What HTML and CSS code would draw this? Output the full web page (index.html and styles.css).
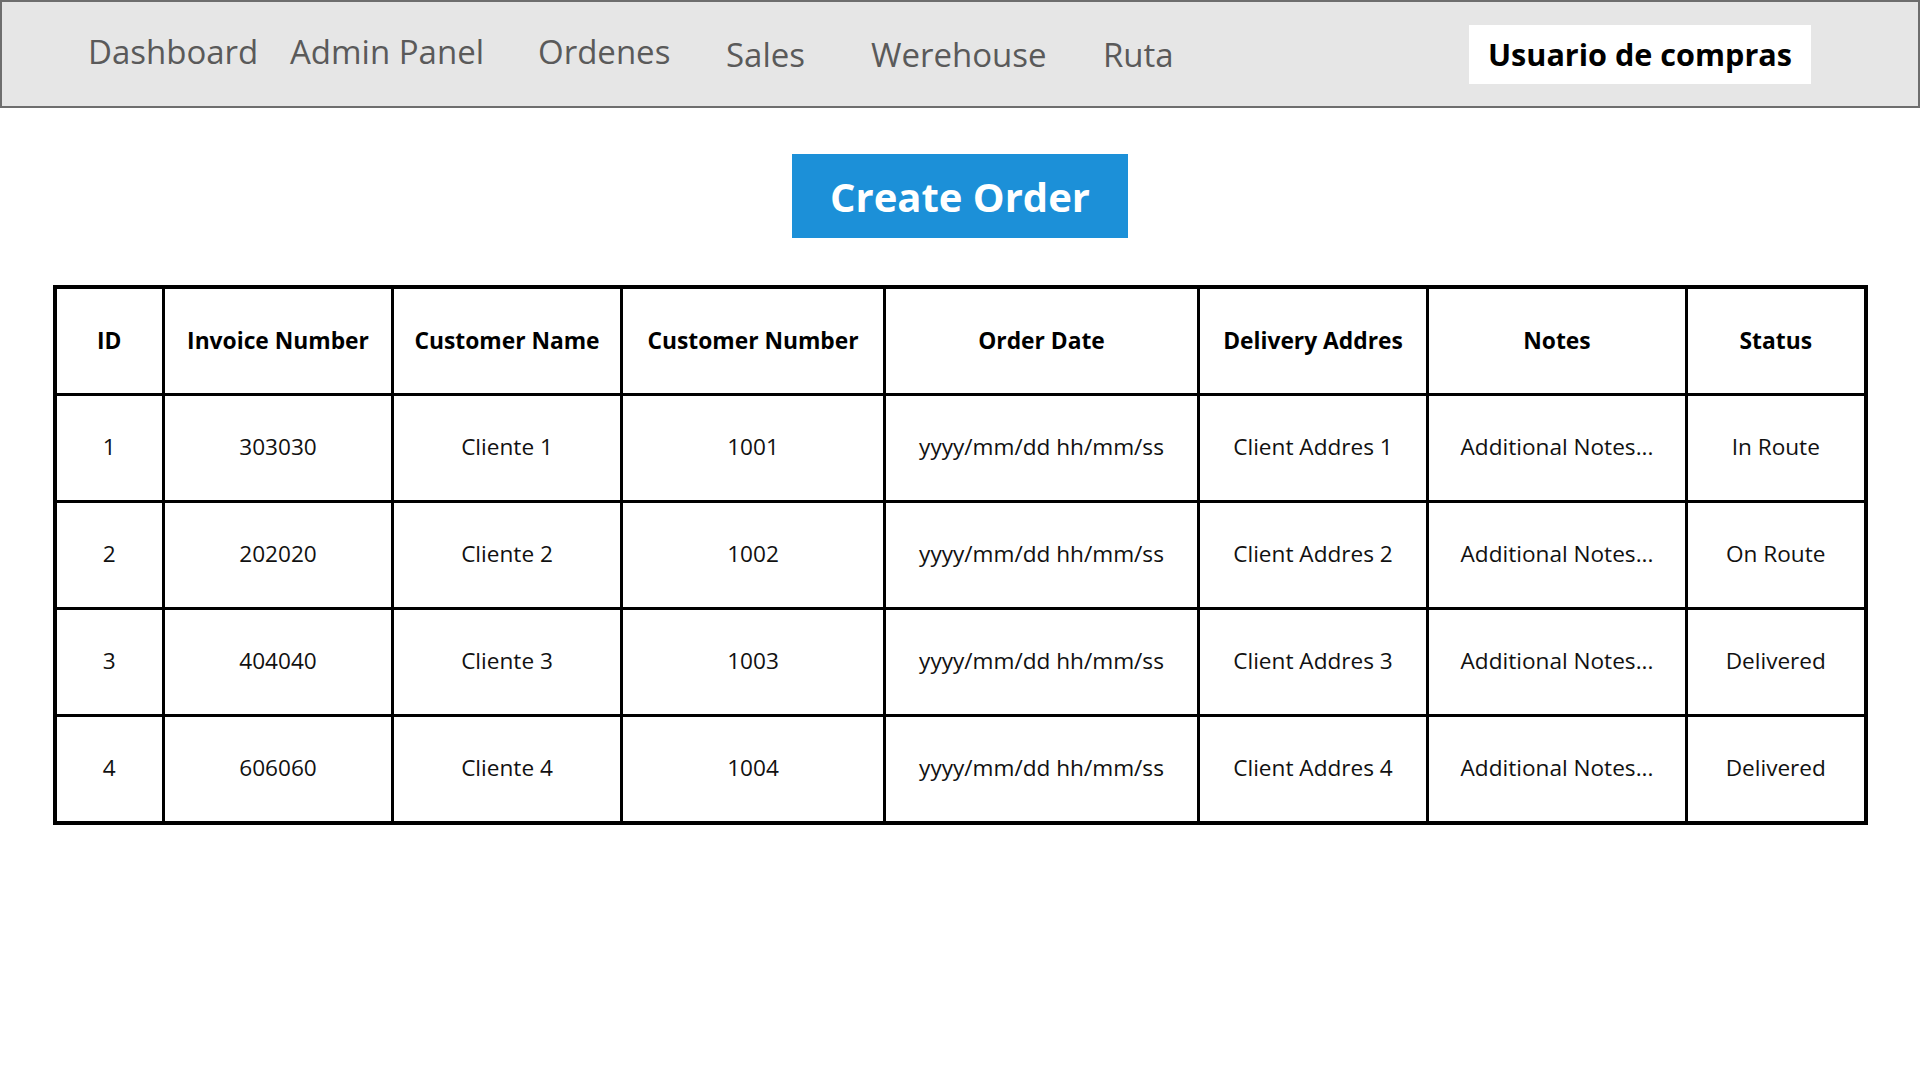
FILE: index.html
```html
<!DOCTYPE html>
<html lang="es">
<head>
<meta charset="utf-8">
<title>Ordenes</title>
<link rel="stylesheet" href="styles.css">
</head>
<body>
<header class="topbar">
  <nav class="menu">
    <a class="menu-item" href="#">Dashboard</a>
    <a class="menu-item" href="#">Admin Panel</a>
    <a class="menu-item" href="#">Ordenes</a>
    <a class="menu-item low" href="#">Sales</a>
    <a class="menu-item low" href="#">Werehouse</a>
    <a class="menu-item low" href="#">Ruta</a>
  </nav>
  <div class="user-box">Usuario de compras</div>
</header>
<main class="content">
  <button class="create-btn" type="button">Create Order</button>
  <table class="orders">
    <colgroup>
      <col class="c-id"><col class="c-inv"><col class="c-name"><col class="c-num"><col class="c-date"><col class="c-addr"><col class="c-notes"><col class="c-status">
    </colgroup>
    <thead>
      <tr><th>ID</th><th>Invoice Number</th><th>Customer Name</th><th>Customer Number</th><th>Order Date</th><th>Delivery Addres</th><th>Notes</th><th>Status</th></tr>
    </thead>
    <tbody>
      <tr><td>1</td><td>303030</td><td>Cliente 1</td><td>1001</td><td>yyyy/mm/dd hh/mm/ss</td><td>Client Addres 1</td><td>Additional Notes...</td><td>In Route</td></tr>
      <tr><td>2</td><td>202020</td><td>Cliente 2</td><td>1002</td><td>yyyy/mm/dd hh/mm/ss</td><td>Client Addres 2</td><td>Additional Notes...</td><td>On Route</td></tr>
      <tr><td>3</td><td>404040</td><td>Cliente 3</td><td>1003</td><td>yyyy/mm/dd hh/mm/ss</td><td>Client Addres 3</td><td>Additional Notes...</td><td>Delivered</td></tr>
      <tr><td>4</td><td>606060</td><td>Cliente 4</td><td>1004</td><td>yyyy/mm/dd hh/mm/ss</td><td>Client Addres 4</td><td>Additional Notes...</td><td>Delivered</td></tr>
    </tbody>
  </table>
</main>
</body>
</html>
```

FILE: styles.css
```css
html, body {
  margin: 0;
  padding: 0;
  background: #ffffff;
  font-family: "Open Sans", "Liberation Sans", sans-serif;
}

.topbar {
  box-sizing: border-box;
  height: 108px;
  background: #e6e6e6;
  border: 2px solid #6e6e6e;
  display: flex;
  align-items: center;
  padding: 0 0 0 86px;
}

.menu {
  display: grid;
  grid-template-columns: 202px 248px 188px 145px 232px 366px;
  align-items: center;
  height: 100%;
}

.menu-item {
  color: #5a5a5a;
  text-decoration: none;
  font-size: 33px;
  line-height: 40px;
  padding-top: 3px;
  padding-bottom: 8px;
}

.menu-item.low {
  padding-bottom: 0;
  padding-top: 2px;
}

.user-box {
  box-sizing: border-box;
  width: 342px;
  height: 59px;
  background: #ffffff;
  color: #000000;
  font-weight: 700;
  font-size: 30.6px;
  display: flex;
  align-items: center;
  justify-content: center;
}

.content {
  display: flex;
  flex-direction: column;
  align-items: center;
  padding-top: 46px;
}

.create-btn {
  width: 336px;
  height: 84px;
  border: none;
  background: #1c90d8;
  color: #ffffff;
  font-family: "Open Sans", "Liberation Sans", sans-serif;
  font-weight: 700;
  font-size: 40px;
  padding: 0;
  cursor: pointer;
}

.orders {
  margin-top: 47px;
  width: 1815px;
  border-collapse: collapse;
  table-layout: fixed;
  border: 4px solid #000000;
}

.c-id { width: 109px; }
.c-inv { width: 229px; }
.c-name { width: 229px; }
.c-num { width: 263px; }
.c-date { width: 314px; }
.c-addr { width: 229px; }
.c-notes { width: 259px; }
.c-status { width: 179px; }

.orders th,
.orders td {
  border: 3px solid #000000;
  height: 101px;
  padding: 0 0 3px 0;
  text-align: center;
  vertical-align: middle;
  color: #111111;
  font-size: 22.6px;
}

.orders th {
  font-weight: 700;
  font-size: 22.8px;
  color: #000000;
  height: 102px;
  padding-bottom: 2px;
}

.orders td {
  font-weight: 400;
}
```
